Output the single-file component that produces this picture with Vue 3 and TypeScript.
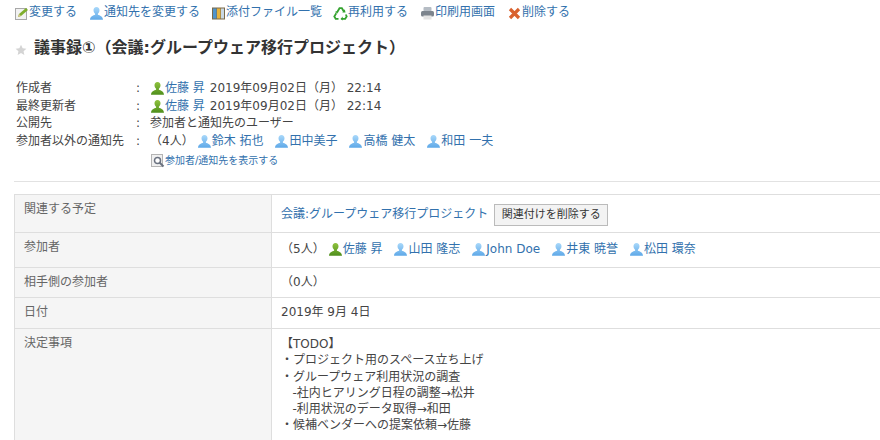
<script setup lang="ts">
interface Person { name: string; me?: boolean }
const actions = [
  { label: '変更する', icon: 'edit' },
  { label: '通知先を変更する', icon: 'user' },
  { label: '添付ファイル一覧', icon: 'book' },
  { label: '再利用する', icon: 'recycle' },
  { label: '印刷用画面', icon: 'print' },
  { label: '削除する', icon: 'del' },
]
const notified: Person[] = [{ name: '鈴木 拓也' }, { name: '田中美子' }, { name: '高橋 健太' }, { name: '和田 一夫' }]
const members: Person[] = [{ name: '佐藤 昇', me: true }, { name: '山田 隆志' }, { name: 'John Doe' }, { name: '井東 暁誉' }, { name: '松田 環奈' }]
const todo = ['【TODO】', '・プロジェクト用のスペース立ち上げ', '・グループウェア利用状況の調査', '   -社内ヒアリング日程の調整→松井', '   -利用状況のデータ取得→和田', '・候補ベンダーへの提案依頼→佐藤']
</script>

<template>
  <div class="page">
    <svg width="0" height="0" class="defs">
      <defs>
        <linearGradient id="gs" x1="0" y1="0" x2="0" y2="1"><stop offset="0" stop-color="#a9d8fa" /><stop offset="1" stop-color="#5fa9e8" /></linearGradient>
        <linearGradient id="gg" x1="0" y1="0" x2="0" y2="1"><stop offset="0" stop-color="#8fc23e" /><stop offset="1" stop-color="#4f8f1c" /></linearGradient>
        <symbol id="user-sky" viewBox="0 0 15 15"><path d="M7.500 1C5.600 1 4.500 2.400 4.500 4.300c0 1.500.7 2.800 1.600 3.500v1C4.200 9.500 1.300 10.300 1 13.700h13c-.3-3.400-3.200-4.200-5.100-4.900v-1c.9-.7 1.600-2 1.600-3.500C10.500 2.400 9.400 1 7.500 1z" fill="url(#gs)" /></symbol>
        <symbol id="user-green" viewBox="0 0 15 15"><path d="M7.500 1C5.600 1 4.500 2.400 4.500 4.300c0 1.500.7 2.800 1.600 3.500v1C4.200 9.500 1.300 10.300 1 13.700h13c-.3-3.400-3.200-4.200-5.100-4.900v-1c.9-.7 1.600-2 1.600-3.500C10.500 2.400 9.400 1 7.500 1z" fill="url(#gg)" /></symbol>
      </defs>
    </svg>

    <nav class="toolbar">
      <a v-for="a in actions" :key="a.label" class="link action">
        <svg v-if="a.icon === 'edit'" class="ic" viewBox="0 0 15 15"><rect x="1.500" y="2.500" width="11" height="11" fill="#f2f2f2" stroke="#a8a8a8" /><path d="M4 11l1-3 7-6 2 2-7 6z" fill="#7fae2c" /><path d="M4 11l1-3 2 2z" fill="#d8c48a" /></svg>
        <svg v-else-if="a.icon === 'user'" class="ic"><use href="#user-sky" /></svg>
        <svg v-else-if="a.icon === 'book'" class="ic" viewBox="0 0 15 15"><rect x="1" y="1.500" width="13" height="12" fill="#7a6a4a" /><rect x="2" y="2.500" width="3.500" height="10" fill="#4f94cc" /><rect x="6" y="2.500" width="3.500" height="10" fill="#e6b23c" /><rect x="10" y="2.500" width="3" height="10" fill="#c9d8e4" /></svg>
        <svg v-else-if="a.icon === 'recycle'" class="ic" viewBox="0 0 15 15"><path d="M4.300 6L6.500 2.200h2.400L11 5.800M12.800 8.500l.9 2-1.500 2.300H8.500M5.500 12.800H2.700L1.300 10.500l2-3.300" fill="none" stroke="#35a32f" stroke-width="1.800" /><path d="M9.300 6.500h3.200l-.7-3.200zM9.700 10.500l-2.200 2.400 2.200 1.600zM1.800 6l2.900 1.400.5-3z" fill="#35a32f" /></svg>
        <svg v-else-if="a.icon === 'print'" class="ic" viewBox="0 0 15 15"><rect x="3.500" y="1" width="8" height="4.500" rx="1" fill="#b5bcc4" /><rect x="1" y="5" width="13" height="5.500" rx="1.500" fill="#7c848d" /><rect x="3.500" y="9.500" width="8" height="4" fill="#e4e4e4" /></svg>
        <svg v-else class="ic" viewBox="0 0 15 15"><path d="M3 3l9 9M12 3l-9 9" stroke="#d9622f" stroke-width="3.200" /></svg>
        {{ a.label }}
      </a>
    </nav>

    <h1 class="title">
      <svg class="star" viewBox="0 0 14 14"><path d="M7 .8l1.900 4.100 4.400.5-3.300 3 .9 4.400L7 10.600l-3.900 2.200.9-4.400-3.300-3 4.400-.5z" fill="#d4d4d4" /></svg>
      議事録①（会議:グループウェア移行プロジェクト）
    </h1>

    <div class="meta">
      <span>作成者</span><span>:</span>
      <span class="val"><a class="link person"><svg class="ic"><use href="#user-green" /></svg>佐藤 昇</a><span>2019年09月02日（月） 22:14</span></span>
      <span>最終更新者</span><span>:</span>
      <span class="val"><a class="link person"><svg class="ic"><use href="#user-green" /></svg>佐藤 昇</a><span>2019年09月02日（月） 22:14</span></span>
      <span>公開先</span><span>:</span>
      <span class="val">参加者と通知先のユーザー</span>
      <span>参加者以外の通知先</span><span>:</span>
      <span class="people">
        <span class="count">（4人）</span>
        <a v-for="p in notified" :key="p.name" class="link person"><svg class="ic"><use href="#user-sky" /></svg>{{ p.name }}</a>
      </span>
      <span class="show">
        <a class="link small">
          <svg class="ic" viewBox="0 0 15 15"><rect x="1.500" y="1.500" width="11" height="12" fill="#f0f0f0" stroke="#b4b4b4" /><circle cx="7.500" cy="7.500" r="3" fill="#fff" stroke="#6b7280" stroke-width="1.500" /><path d="M9.500 9.500l4 4" stroke="#6b7280" stroke-width="2" /></svg>
          参加者/通知先を表示する
        </a>
      </span>
    </div>

    <hr class="rule" />

    <table class="detail">
      <tbody>
        <tr class="r1">
          <th>関連する予定</th>
          <td><div class="related"><a class="link">会議:グループウェア移行プロジェクト</a><button class="btn">関連付けを削除する</button></div></td>
        </tr>
        <tr class="r2">
          <th>参加者</th>
          <td>
            <div class="people">
              <span class="count">（5人）</span>
              <a v-for="p in members" :key="p.name" class="link person"><svg class="ic"><use :href="p.me ? '#user-green' : '#user-sky'" /></svg>{{ p.name }}</a>
            </div>
          </td>
        </tr>
        <tr class="r3"><th>相手側の参加者</th><td>（0人）</td></tr>
        <tr class="r4"><th>日付</th><td>2019年 9月 4日</td></tr>
        <tr class="r5">
          <th>決定事項</th>
          <td><div v-for="l in todo" :key="l" class="line">{{ l }}</div></td>
        </tr>
      </tbody>
    </table>
  </div>
</template>

<style>
html, body { margin: 0; overflow: hidden; }
</style>

<style scoped>
.page {
  width: 880px;
  height: 440px;
  overflow: hidden;
  box-sizing: border-box;
  padding: 4px 0 0 14px;
  font: 12px/17.500px "DejaVu Sans", "Noto Sans CJK JP", sans-serif;
  color: #444;
}
.defs { position: absolute; }
.link { color: #3271ad; text-decoration: none; }
.ic { width: 15px; height: 15px; flex: none; }
.toolbar { display: flex; gap: 11px; height: 18px; margin-top: 0; align-items: center; }
.action { display: inline-flex; align-items: center; white-space: nowrap; }
.action:nth-child(2) { margin-left: 1px; }
.action:nth-child(5), .action:nth-child(6) { margin-left: 1px; }
.title {
  display: flex;
  align-items: center;
  margin: 16px 0 0;
  height: 20px;
  font-size: 16px;
  font-weight: 700;
  color: #333;
}
.star { width: 12px; height: 12px; margin: 4px 7px 0 1px; flex: none; }
.meta {
  display: grid;
  grid-template-columns: 120px 14px 1fr;
  margin: 22px 0 0 2px;
}
.val { display: flex; align-items: center; gap: 5px; white-space: nowrap; height: 17.500px; }
.people { display: flex; align-items: center; gap: 11px; white-space: nowrap; height: 17.500px; }
.person { display: inline-flex; align-items: center; }
.count { margin-right: -8px; }
.show { grid-column: 3; margin-top: 2px; }
.small { display: inline-flex; align-items: center; font-size: 10px; }
.rule { margin: 7px 0 0; border: 0; border-top: 1px solid #e2e2e2; }
.detail {
  width: 866px;
  margin-top: 12px;
  border-collapse: collapse;
  table-layout: fixed;
}
.detail th, .detail td {
  border: 1px solid #dedede;
  border-right: 0;
  text-align: left;
  vertical-align: top;
  font-weight: 400;
  padding: 6px 9px;
}
.detail th { width: 238px; background: #f5f5f5; color: #666; }
.r1 { height: 38px; }
.r2 { height: 35px; }
.r3 { height: 30px; }
.r4 { height: 31px; }
.r1 td { padding-top: 9px; padding-bottom: 4px; }
.r2 td { padding-top: 8px; }
.related { display: flex; align-items: center; gap: 6px; }
.btn {
  height: 22px;
  width: 114px;
  padding: 0;
  font: 11px/20px "DejaVu Sans", "Noto Sans CJK JP", sans-serif;
  color: #333;
  background: #f3f3f3;
  border: 1px solid #bbb;
}
.line { white-space: pre; line-height: 16.200px; }
.r5 td { padding-top: 7px; padding-bottom: 30px; }
</style>
